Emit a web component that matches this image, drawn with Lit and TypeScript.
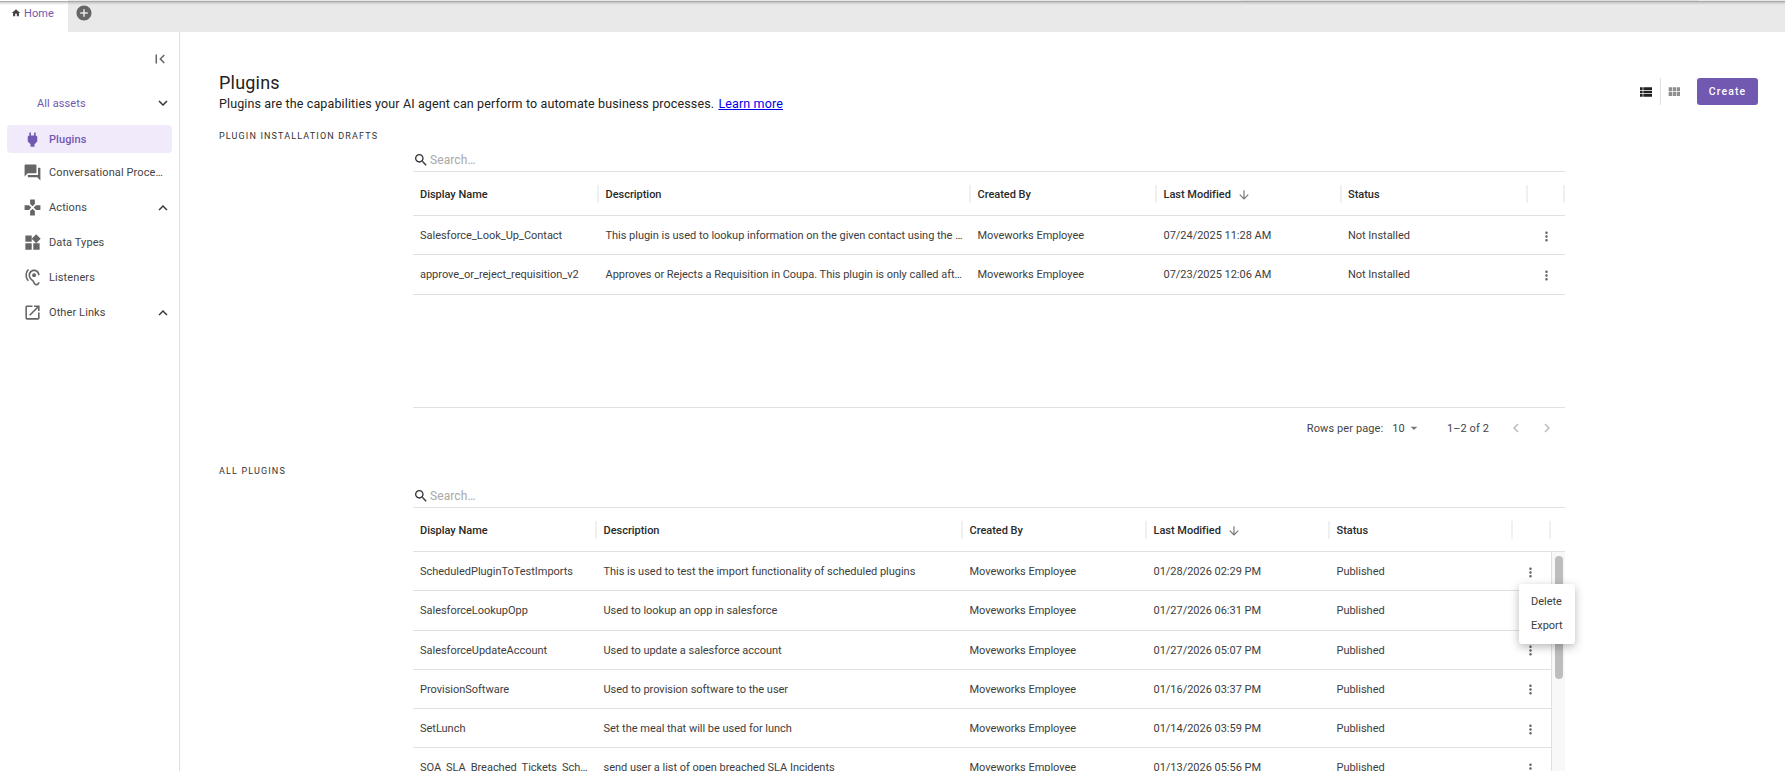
import { LitElement, html, css, svg } from "lit";
import { customElement, property } from "lit/decorators.js";

const P: Record<string, string> = {
  home: "M10 20v-6h4v6h5v-8h3L12 3 2 12h3v8z",
  plus: "M12 2C6.48 2 2 6.48 2 12s4.48 10 10 10 10-4.48 10-10S17.52 2 12 2zm5 11h-4v4h-2v-4H7v-2h4V7h2v4h4v2z",
  collapse: "M18.41 16.59L13.82 12l4.59-4.59L17 6l-6 6 6 6zM6 6h2v12H6z",
  down: "M16.59 8.59L12 13.17 7.41 8.59 6 10l6 6 6-6z",
  up: "M12 8l-6 6 1.41 1.41L12 10.83l4.59 4.58L18 14z",
  plug: "M16.01 7L16 3h-2v4h-4V3H8v4h-.01C7 6.99 6 7.99 6 8.99v5.49L9.5 18v3h5v-3l3.5-3.51v-5.5c0-1-1-2-1.99-1.99z",
  forum: "M21 6h-2v9H6v2c0 .55.45 1 1 1h11l4 4V7c0-.55-.45-1-1-1zm-4 6V3c0-.55-.45-1-1-1H3c-.55 0-1 .45-1 1v14l4-4h10c.55 0 1-.45 1-1z",
  games: "M15 7.5V2H9v5.5l3 3 3-3zM7.5 9H2v6h5.5l3-3-3-3zM9 16.5V22h6v-5.5l-3-3-3 3zM16.5 9l-3 3 3 3H22V9h-5.5z",
  widgets: "M13 13v8h8v-8h-8zM3 21h8v-8H3v8zM3 3v8h8V3H3zm13.66-1.31L11 7.34 16.66 13l5.66-5.66-5.66-5.65z",
  hearing: "M17 20c-.29 0-.56-.06-.76-.15-.71-.37-1.21-.88-1.71-2.38-.51-1.56-1.47-2.29-2.39-3-.79-.61-1.61-1.24-2.32-2.53C9.29 10.98 9 9.93 9 9c0-2.8 2.2-5 5-5s5 2.2 5 5h2c0-3.93-3.07-7-7-7S7 5.07 7 9c0 1.26.38 2.65 1.07 3.9.91 1.65 1.98 2.48 2.85 3.15.81.62 1.39 1.07 1.71 2.05.6 1.82 1.37 2.84 2.73 3.55.51.23 1.07.35 1.64.35 2.21 0 4-1.79 4-4h-2c0 1.1-.9 2-2 2zM7.64 2.64L6.22 1.22C4.23 3.21 3 5.96 3 9s1.23 5.79 3.22 7.78l1.41-1.41C6.01 13.74 5 11.49 5 9s1.01-4.74 2.64-6.36zM11.5 9c0 1.38 1.12 2.5 2.5 2.5s2.5-1.12 2.5-2.5-1.12-2.5-2.5-2.5-2.5 1.12-2.5 2.5z",
  open: "M19 19H5V5h7V3H5c-1.11 0-2 .9-2 2v14c0 1.1.89 2 2 2h14c1.1 0 2-.9 2-2v-7h-2v7zM14 3v2h3.59l-9.83 9.83 1.41 1.41L19 6.41V10h2V3h-7z",
  search: "M15.5 14h-.79l-.28-.27C15.41 12.59 16 11.11 16 9.5 16 5.91 13.09 3 9.5 3S3 5.91 3 9.5 5.91 16 9.5 16c1.61 0 3.09-.59 4.23-1.57l.27.28v.79l5 4.99L20.49 19l-4.99-5zm-6 0C7.01 14 5 11.99 5 9.5S7.01 5 9.5 5 14 7.01 14 9.5 11.99 14 9.5 14z",
  more: "M12 8c1.1 0 2-.9 2-2s-.9-2-2-2-2 .9-2 2 .9 2 2 2zm0 2c-1.1 0-2 .9-2 2s.9 2 2 2 2-.9 2-2-.9-2-2-2zm0 6c-1.1 0-2 .9-2 2s.9 2 2 2 2-.9 2-2-.9-2-2-2z",
  arrow: "M20 12l-1.41-1.41L13 16.17V4h-2v12.17l-5.58-5.59L4 12l8 8 8-8z",
  list: "M3 14h4v-4H3v4zm0 5h4v-4H3v4zM3 9h4V5H3v4zm5 5h13v-4H8v4zm0 5h13v-4H8v4zM8 5v4h13V5H8z",
  grid: "M4 11h5V5H4v6zm0 7h5v-6H4v6zm6 0h5v-6h-5v6zm6 0h5v-6h-5v6zm-6-7h5V5h-5v6zm6-6v6h5V5h-5z",
  left: "M15.41 7.41L14 6l-6 6 6 6 1.41-1.41L10.83 12z",
  right: "M10 6L8.59 7.41 13.17 12l-4.58 4.59L10 18l6-6z",
  drop: "M7 10l5 5 5-5z",
};

const icon = (name: string, size: number, cls = "") => html`<svg class=${cls} width=${size} height=${size} viewBox="0 0 24 24" fill="currentColor">${svg`<path d=${P[name]}></path>`}</svg>`;

interface Row { name: string; desc: string; by: string; date: string; status: string; }

@customElement("plugin-table")
class PluginTable extends LitElement {
  @property({ type: Array }) rows: Row[] = [];
  @property({ type: Array }) cols: number[] = [];
  @property({ type: Boolean }) scroll = false;

  static styles = css`
    :host { display: block; width: 1152px; position: relative; font-family: Roboto, sans-serif; font-size: 11px; letter-spacing: -0.02px; color: #3d3d3d; }
    .search { height: 22px; display: flex; align-items: center; border-bottom: 1px solid #e0e0e0; color: #a8a8a8; font-size: 12px; letter-spacing: 0.1px; }
    .search svg { color: #333; margin-right: 1px; }
    .grid { display: grid; }
    .head { height: 43px; align-items: center; border-bottom: 1px solid #e0e0e0; font-weight: 500; color: #2a2a2a; }
    .hc { height: 18px; padding: 2px 0 0 6.5px; border-right: 2px solid #f0f0f0; box-sizing: border-box; display: flex; align-items: center; }
    .hc:first-child { padding-left: 7px; }
    .hc svg { color: #777; margin-left: 6px; }
    .hc.blank { padding: 0; }
    .body { display: flex; }
    .rows { flex: 1; min-width: 0; }
    .row { height: 39.25px; box-sizing: border-box; align-items: center; border-bottom: 1px solid #e0e0e0; }
    .cell { padding: 1px 7px 0 6.5px; white-space: nowrap; overflow: hidden; text-overflow: ellipsis; }
    .cell:first-child { padding-left: 7px; }
    .kebab { display: flex; justify-content: center; color: #666; padding-top: 2px; }
    .scrolled .kebab { padding-right: 3px; }
    .track { width: 14px; background: #f8f8f8; border-left: 1px solid #e0e0e0; box-sizing: border-box; padding: 4px 0 0 3px; flex: none; }
    .thumb { width: 8px; height: 123px; border-radius: 4px; background: #bdbdbd; }
    .menu { position: absolute; top: 99px; right: -10px; width: 56px; height: 60px; box-sizing: border-box; background: #fff; border-radius: 3px; box-shadow: 0 3px 10px rgba(0,0,0,.28); padding: 6px 0 0 12px; color: #3d3d3d; z-index: 2; }
    .menu div { height: 24px; line-height: 24px; }
  `;

  render() {
    const tpl = `${this.cols.map((c) => c + "px").join(" ")}`;
    const heads = ["Display Name", "Description", "Created By", "Last Modified", "Status", ""];
    return html`
      <div class="search">${icon("search", 16)}Search…</div>
      <div class="grid head" style="grid-template-columns:${tpl}${this.scroll ? " 1fr" : ""}">
        ${heads.map((h) => html`<div class="hc ${h ? "" : "blank"}">${h}${h === "Last Modified" ? icon("arrow", 14) : ""}</div>`)}
      </div>
      <div class="body ${this.scroll ? "scrolled" : ""}">
        <div class="rows">
          ${this.rows.map((r) => html`<div class="grid row" style="grid-template-columns:${tpl}">
            <div class="cell">${r.name}</div><div class="cell">${r.desc}</div><div class="cell">${r.by}</div><div class="cell">${r.date}</div><div class="cell">${r.status}</div>
            <div class="kebab">${icon("more", 15)}</div>
          </div>`)}
        </div>
        ${this.scroll ? html`<div class="track"><div class="thumb"></div></div>` : ""}
      </div>
      ${this.scroll ? html`<div class="menu"><div>Delete</div><div>Export</div></div>` : ""}
    `;
  }
}

const drafts: Row[] = [
  { name: "Salesforce_Look_Up_Contact", desc: "This plugin is used to lookup information on the given contact using the provided details from the user", by: "Moveworks Employee", date: "07/24/2025 11:28 AM", status: "Not Installed" },
  { name: "approve_or_reject_requisition_v2", desc: "Approves or Rejects a Requisition in Coupa. This plugin is only called after the requisition is reviewed", by: "Moveworks Employee", date: "07/23/2025 12:06 AM", status: "Not Installed" },
];
const all: Row[] = [
  { name: "ScheduledPluginToTestImports", desc: "This is used to test the import functionality of scheduled plugins", by: "Moveworks Employee", date: "01/28/2026 02:29 PM", status: "Published" },
  { name: "SalesforceLookupOpp", desc: "Used to lookup an opp in salesforce", by: "Moveworks Employee", date: "01/27/2026 06:31 PM", status: "Published" },
  { name: "SalesforceUpdateAccount", desc: "Used to update a salesforce account", by: "Moveworks Employee", date: "01/27/2026 05:07 PM", status: "Published" },
  { name: "ProvisionSoftware", desc: "Used to provision software to the user", by: "Moveworks Employee", date: "01/16/2026 03:37 PM", status: "Published" },
  { name: "SetLunch", desc: "Set the meal that will be used for lunch", by: "Moveworks Employee", date: "01/14/2026 03:59 PM", status: "Published" },
  { name: "SOA_SLA_Breached_Tickets_Schedule_Daily", desc: "send user a list of open breached SLA Incidents", by: "Moveworks Employee", date: "01/13/2026 05:56 PM", status: "Published" },
];

const nav = [
  { icon: "forum", label: "Conversational Processes" },
  { icon: "games", label: "Actions", chev: true },
  { icon: "widgets", label: "Data Types" },
  { icon: "hearing", label: "Listeners" },
  { icon: "open", label: "Other Links", chev: true },
];

@customElement("app-root")
class AppRoot extends LitElement {
  static styles = css`
    :host { display: flex; flex-direction: column; height: 771px; overflow: hidden; position: relative; background: #fff; font-family: Roboto, sans-serif; color: #222; }
    .shade { position: absolute; left: 0; right: 0; top: 1px; height: 4px; background: linear-gradient(#9b9b9b, rgba(150,150,150,.35) 40%, rgba(150,150,150,0)); z-index: 3; }
    .strip { position: absolute; left: 1241px; width: 457px; top: 0; height: 1px; background: #dcdcdc; z-index: 3; }
    .tabs { height: 32px; flex: none; background: #e9e9e9; display: flex; }
    .tab { width: 68px; background: #fff; display: flex; align-items: center; padding: 0 0 6px 11px; box-sizing: border-box; color: #7158b0; font-size: 11px; letter-spacing: 0.1px; }
    .tab svg { color: #444; margin-right: 3px; }
    .add { color: #666; margin: 4px 0 0 7px; }
    .page { flex: 1; display: flex; min-height: 0; }
    aside { width: 180px; flex: none; box-sizing: border-box; border-right: 1px solid #e0e0e0; font-size: 11px; letter-spacing: 0.1px; color: #444; }
    .tool { display: flex; justify-content: flex-end; margin: 18px 10px 0 0; height: 20px; color: #666; }
    .assets { display: flex; align-items: center; justify-content: space-between; margin: 23px 7px 0 37px; height: 20px; color: #7158b0; }
    .assets svg { color: #333; }
    .item { display: flex; align-items: center; margin: 0 7px; height: 35px; padding-left: 16px; border-radius: 4px; }
    .item.active { height: 28px; margin: 12px 7px 2px; background: #f1eafb; color: #7158b0; font-weight: 500; }
    .item svg.ic { color: #666; margin-right: 7px; flex: none; }
    .item.active svg.ic { color: #7158b0; }
    .item span { flex: 1; min-width: 0; white-space: nowrap; overflow: hidden; text-overflow: ellipsis; padding-right: 5px; }
    .item .chev { color: #333; margin-left: auto; flex: none; }
    main { flex: 1; min-width: 0; padding: 40px 27px 0 39px; }
    .top { display: flex; justify-content: space-between; height: 42px; }
    h1 { margin: 0; font-size: 18px; font-weight: 400; line-height: 22px; color: #222; letter-spacing: 0.2px; }
    .sub { font-size: 12.5px; line-height: 20px; letter-spacing: 0.13px; color: #222; }
    .sub a { color: #0000ee; text-decoration: underline; margin-left: 1px; }
    .actions { display: flex; align-items: center; height: 27px; margin-top: 6px; }
    .actions .l { color: #222; }
    .actions .g { color: #8e8e8e; }
    .div { width: 1px; height: 27px; background: #e0e0e0; margin: 0 5px 0 6px; }
    button { margin-left: 15px; width: 61px; height: 27px; border: 0; border-radius: 3px; background: #7158b0; color: #fff; font: 500 10.5px Roboto, sans-serif; letter-spacing: 1.1px; padding: 0; }
    .label { font-size: 9px; letter-spacing: 1.15px; color: #333; line-height: 12px; text-transform: uppercase; }
    .lab1 { margin-top: 16px; }
    .lab2 { margin-top: 18px; }
    plugin-table { margin: 7px 0 0 194px; }
    plugin-table.second { margin-top: 8px; }
    .first { height: 258px; }
    .foot { margin-left: 194px; width: 1152px; height: 38px; padding-top: 1px; border-top: 1px solid #e0e0e0; display: flex; align-items: center; justify-content: flex-end; font-size: 11px; letter-spacing: 0.1px; color: #444; box-sizing: content-box; }
    .foot .n { margin-left: 9px; }
    .foot .d { color: #777; margin: 0 25px 0 1px; }
    .foot .r { margin: 0 18px 0 0; }
    .foot .c { color: #bcbcbc; margin-right: 13px; }
    .foot .c:last-child { margin-right: 9px; }
  `;

  render() {
    return html`
      <div class="shade"></div>
      <div class="strip"></div>
      <div class="tabs">
        <div class="tab">${icon("home", 10)}Home</div>
        ${icon("plus", 18, "add")}
      </div>
      <div class="page">
        <aside>
          <div class="tool">${icon("collapse", 18)}</div>
          <div class="assets">All assets${icon("down", 18)}</div>
          <div class="item active">${icon("plug", 19, "ic")}<span>Plugins</span></div>
          ${nav.map((n) => html`<div class="item">${icon(n.icon, 19, "ic")}<span>${n.label}</span>${n.chev ? icon("up", 18, "chev") : ""}</div>`)}
        </aside>
        <main>
          <div class="top">
            <div>
              <h1>Plugins</h1>
              <div class="sub">Plugins are the capabilities your AI agent can perform to automate business processes. <a href="#">Learn more</a></div>
            </div>
            <div class="actions">
              ${icon("list", 16, "l")}<div class="div"></div>${icon("grid", 16, "g")}
              <button>Create</button>
            </div>
          </div>
          <div class="label lab1">Plugin Installation Drafts</div>
          <plugin-table class="first" .rows=${drafts} .cols=${[186, 372, 186, 184.5, 186, 37.5]}></plugin-table>
          <div class="foot">
            Rows per page:<span class="n">10</span>${icon("drop", 16, "d")}
            <span class="r">1–2 of 2</span>${icon("left", 18, "c")}${icon("right", 18, "c")}
          </div>
          <div class="label lab2">All Plugins</div>
          <plugin-table class="second" .rows=${all} .cols=${[184, 366, 184, 183, 183, 38]} .scroll=${true}></plugin-table>
        </main>
      </div>
    `;
  }
}
